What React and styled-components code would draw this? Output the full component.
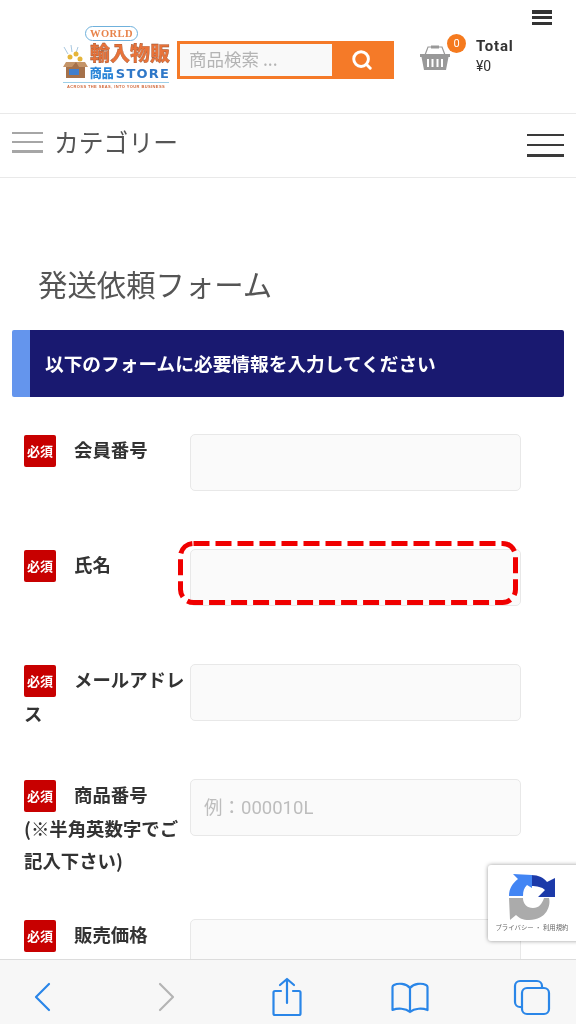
import React from 'react'
import styled, { createGlobalStyle } from 'styled-components'
import { Search } from 'lucide-react'

const GlobalStyle = createGlobalStyle`
  html, body {
    margin: 0;
    padding: 0;
    background: #fff;
  }
  * {
    box-sizing: border-box;
  }
`

const sans = `Roboto, "Noto Sans CJK JP", sans-serif`
const jp = `"Noto Sans CJK JP", sans-serif`

const Page = styled.div`
  position: relative;
  width: 576px;
  height: 1024px;
  overflow: hidden;
  background: #fff;
  font-family: ${jp};
  filter: blur(0.45px);
`
const Header = styled.header`
  display: flex;
  align-items: flex-start;
  height: 114px;
  padding: 26px 24px 0 60px;
  border-bottom: 1px solid #e9e9e9;
`
const Logo = styled.div`
  display: flex;
  flex-direction: column;
  width: 112px;
  flex: none;
`
const LogoPill = styled.div`
  width: 53px;
  height: 15px;
  margin-left: 25px;
  border: 1px solid #6fb1dc;
  border-radius: 8px;
  color: #e8834a;
  font: 900 10.5px/13px "Liberation Serif", serif;
  letter-spacing: 0.4px;
  text-align: center;
`
const LogoMiddle = styled.div`
  display: flex;
  align-items: flex-end;
  padding-left: 3px;
`
const LogoBox = styled.svg`
  width: 25px;
  height: 36px;
  flex: none;
  margin: 0 -4px 1px 0;
`
const LogoWords = styled.div`
  display: flex;
  flex-direction: column;
  align-items: flex-end;
  flex: 1;
  padding-right: 2px;
`
const LogoBig = styled.div`
  color: #e8733a;
  font: 900 20px/24px ${jp};
  white-space: nowrap;
  -webkit-text-stroke: 0.3px #8a4a2a;
`
const LogoStore = styled.div`
  color: #2c86d8;
  font: 900 12px/15px ${jp};
  white-space: nowrap;
`
const StoreLatin = styled.span`
  margin-left: 2px;
  font: 900 13px/15px "DejaVu Sans", sans-serif;
  letter-spacing: 1.2px;
  color: #2f78c8;
`
const LogoTag = styled.div`
  width: 106px;
  margin: 1px 0 0 3px;
  padding-top: 1px;
  border-top: 1px solid #9ccfe8;
  color: #d0683a;
  font: 700 4px/5px "Liberation Sans", sans-serif;
  letter-spacing: 0.4px;
  white-space: nowrap;
  text-align: center;
`
const SearchForm = styled.form`
  display: flex;
  width: 217px;
  height: 38px;
  margin: 15px 0 0 5px;
  flex: none;
  border: 3px solid #f57a28;
  background: #f57a28;
`
const SearchInput = styled.input`
  width: 152px;
  height: 100%;
  padding: 0 10px 3px 9px;
  border: 0;
  border-radius: 0;
  outline: none;
  background: #f9f9f9;
  font: 400 17.5px ${jp};
  &::placeholder {
    color: #b4b4b4;
    opacity: 1;
  }
`
const SearchButton = styled.button`
  display: flex;
  flex: 1;
  align-items: center;
  justify-content: center;
  padding: 0;
  border: 0;
  background: none;
  color: #fff;
`
const Cart = styled.div`
  display: flex;
  margin: 9px 0 0 26px;
  flex: none;
`
const BasketWrap = styled.div`
  position: relative;
  width: 30px;
  height: 30px;
  margin-top: 8px;
`
const CartBadge = styled.span`
  position: absolute;
  top: -9px;
  left: 27px;
  width: 19px;
  height: 19px;
  border-radius: 50%;
  background: #f57a1e;
  color: #fff;
  font: 400 11px/19px ${sans};
  text-align: center;
`
const CartText = styled.div`
  margin: 2px 0 0 26px;
  color: #333;
`
const CartTotal = styled.div`
  font: 700 15px/19px ${sans};
  letter-spacing: 0.8px;
`
const CartPrice = styled.div`
  font: 400 14px/20px ${sans};
`
const Bars = styled.button`
  display: flex;
  flex-direction: column;
  justify-content: space-between;
  flex: none;
  width: ${(p) => p.$w}px;
  height: ${(p) => p.$h}px;
  padding: 0;
  border: 0;
  background: none;
  span {
    display: block;
    height: ${(p) => p.$t}px;
    background: ${(p) => p.$c};
  }
`
const TopBars = styled(Bars)`
  margin: -16px 0 0 auto;
`
const CategoryBars = styled(Bars)`
  margin-bottom: 7px;
`
const SideBars = styled(Bars)`
  margin-top: -1px;
`
const CategoryBar = styled.nav`
  display: flex;
  align-items: center;
  height: 64px;
  padding: 0 12px;
  border-bottom: 1px solid #e9e9e9;
`
const CategoryName = styled.span`
  margin: -8px auto 0 11px;
  color: #555;
  font: 400 24.8px/1 ${jp};
`
const Title = styled.h1`
  margin: 84px 0 26px 38px;
  color: #555;
  font: 400 29.4px/42px ${jp};
`
const Banner = styled.div`
  display: flex;
  align-items: center;
  height: 67px;
  margin: 0 12px 37px;
  padding-left: 15px;
  border-left: 18px solid #6495ed;
  border-radius: 2px;
  background: #191970;
  color: #fff;
  font: 700 18.7px/1 ${jp};
`
const Form = styled.form`
  padding-left: 24px;
`
const Row = styled.div`
  display: grid;
  grid-template-columns: 166px 331px;
  align-items: start;
`
const Label = styled.label`
  display: block;
  margin-top: -1px;
  padding-bottom: 42px;
  color: #333;
  font: 700 18.4px/32.4px ${jp};
`
const Required = styled.span`
  display: inline-block;
  width: 32px;
  height: 32px;
  margin: 2px 18px 0 0;
  border-radius: 2px;
  background: #c80000;
  color: #fff;
  font: 700 13px/32px ${jp};
  text-align: center;
  vertical-align: top;
`
const Field = styled.div`
  position: relative;
  margin-bottom: 58px;
`
const Input = styled.input`
  display: block;
  width: 100%;
  height: 57px;
  padding: 0 13px;
  border: 1.5px solid #e8e8e8;
  border-radius: 5px;
  outline: none;
  background: #fafafa;
  font: 400 18.5px ${sans};
  &::placeholder {
    color: #bdbdbd;
    opacity: 1;
  }
`
const Highlight = styled.svg`
  position: absolute;
  top: -8px;
  left: -12px;
  width: 340px;
  height: 64px;
  overflow: visible;
`
const Recaptcha = styled.div`
  position: absolute;
  top: 865px;
  left: 488px;
  width: 96px;
  height: 76px;
  padding: 8px 8px 0 21px;
  border-radius: 3px;
  background: #fff;
  box-shadow: 0 0 4px rgba(0, 0, 0, 0.4);
`
const RecaptchaLogo = styled.svg`
  display: block;
  width: 46px;
  height: 49px;
`
const RecaptchaText = styled.div`
  width: 88px;
  margin: 0 0 0 -21px;
  color: #666;
  font: 400 6.4px/12px ${jp};
  text-align: center;
  white-space: nowrap;
`
const Toolbar = styled.div`
  position: absolute;
  left: 0;
  right: 0;
  bottom: 0;
  display: flex;
  align-items: center;
  justify-content: space-between;
  height: 65px;
  padding: 10px 28px 0 26px;
  border-top: 1px solid #dcdcdc;
  background: #f7f7f7;
`
const ToolIcon = styled.svg`
  width: 40px;
  height: 40px;
  margin: 0 -4px;
  fill: none;
  stroke: ${(p) => p.$c || '#2a86e8'};
  stroke-width: 2.2;
  stroke-linecap: round;
  stroke-linejoin: round;
`

const Menu = ({ Comp = Bars, w, h, t, c }) => (
  <Comp $w={w} $h={h} $t={t} $c={c}>
    <span />
    <span />
    <span />
  </Comp>
)

const fields = [
  { label: '会員番号' },
  { label: '氏名', marked: true },
  { label: 'メールアドレス' },
  { label: '商品番号', note: '(※半角英数字でご記入下さい)', placeholder: '例：000010L' },
  { label: '販売価格' },
]

const App = () => (
  <Page>
    <GlobalStyle />
    <Header>
      <Logo>
        <LogoPill>WORLD</LogoPill>
        <LogoMiddle>
          <LogoBox viewBox="0 0 25 36">
            <path d="M1 3l4 7M8 1l1 7M15 3l-2 6" stroke="#a9c8e0" strokeWidth="1" />
            <circle cx="7" cy="13" r="2.500" fill="#e5b53a" />
            <circle cx="13" cy="10" r="2.500" fill="#e5b53a" />
            <circle cx="17" cy="15" r="2.500" fill="#e5b53a" />
            <path d="M3 18h19v16H3z" fill="#a5714a" />
            <path d="M3 18L0 23h9l4-5zM22 18l3 5h-9l-3-5z" fill="#c49468" />
            <path d="M6 25h10v6H6z" fill="#3f7fce" />
          </LogoBox>
          <LogoWords>
            <LogoBig>輸入物販</LogoBig>
            <LogoStore>
              商品<StoreLatin>STORE</StoreLatin>
            </LogoStore>
          </LogoWords>
        </LogoMiddle>
        <LogoTag>ACROSS THE SEAS, INTO YOUR BUSINESS</LogoTag>
      </Logo>
      <SearchForm>
        <SearchInput placeholder="商品検索 ..." />
        <SearchButton type="button" aria-label="search">
          <Search size={22} strokeWidth={3.2} />
        </SearchButton>
      </SearchForm>
      <Cart>
        <BasketWrap>
          <svg width="30" height="28" viewBox="0 0 30 28">
            <path d="M5 12L8 4h14l3 8" fill="none" stroke="#999" strokeWidth="1.2" />
            <path d="M11 2.500h8v3h-8z" fill="#999" />
            <path d="M0 11h30v3h-1.500l-2.500 13H4L1.500 14H0z" fill="#999" />
            <path d="M8 16v8M12.500 16v8M17.500 16v8M22 16v8" stroke="#fff" strokeWidth="2" />
          </svg>
          <CartBadge>0</CartBadge>
        </BasketWrap>
        <CartText>
          <CartTotal>Total</CartTotal>
          <CartPrice>¥0</CartPrice>
        </CartText>
      </Cart>
      <Menu Comp={TopBars} w={20} h={15} t={3.5} c="#333" />
    </Header>
    <CategoryBar>
      <Menu Comp={CategoryBars} w={31} h={21} t={2.5} c="#a6a6a6" />
      <CategoryName>カテゴリー</CategoryName>
      <Menu Comp={SideBars} w={37} h={23} t={2.5} c="#3a3a3a" />
    </CategoryBar>
    <Title>発送依頼フォーム</Title>
    <Banner>以下のフォームに必要情報を入力してください</Banner>
    <Form>
      {fields.map((f) => (
        <Row key={f.label}>
          <Label>
            <Required>必須</Required>
            {f.label}
            {f.note && <br />}
            {f.note}
          </Label>
          <Field>
            <Input placeholder={f.placeholder} />
            {f.marked && (
              <Highlight viewBox="0 0 340 64">
                <rect
                  x="2.500"
                  y="2.500"
                  width="335"
                  height="59"
                  rx="13"
                  fill="none"
                  stroke="#f00000"
                  strokeWidth="5"
                  strokeDasharray="16 6"
                />
              </Highlight>
            )}
          </Field>
        </Row>
      ))}
    </Form>
    <Recaptcha>
      <RecaptchaLogo viewBox="0 0 46 49">
        <path d="M22 2c8 0 13 3 16 7l8-4v19H29l7-7c-3-3-8-4-14-4z" fill="#1c3aa9" />
        <path d="M0 23C0 15 4 10 9 6L4 1l19 1v13l-5-3c-3 3-4 6-4 11z" fill="#4285f4" />
        <path d="M0 25h14c0 6 4 10 10 10 6 0 9-4 11-10h5c2 7-2 22-20 22-6 0-10-2-13-5l-6 5z" fill="#ababab" />
      </RecaptchaLogo>
      <RecaptchaText>プライバシー ・ 利用規約</RecaptchaText>
    </Recaptcha>
    <Toolbar>
      <ToolIcon viewBox="0 0 40 40">
        <path d="M27 7L14 20l13 13" />
      </ToolIcon>
      <ToolIcon viewBox="0 0 40 40" $c="#b4b4b4">
        <path d="M15 7l13 13-13 13" />
      </ToolIcon>
      <ToolIcon viewBox="0 0 40 40">
        <path d="M14 14H8a1.500 1.500 0 0 0-1.500 1.500v21A1.500 1.500 0 0 0 8 38h24a1.500 1.500 0 0 0 1.500-1.500v-21A1.500 1.500 0 0 0 32 14h-6M20 26V2M13 8l7-6 7 6" />
      </ToolIcon>
      <ToolIcon viewBox="0 0 40 40">
        <path d="M20 11C16 6 8 6 4 8c-1 .5-1.500 1-1.500 2v23c5-2 13-2 17.500 2 4.500-4 12.500-4 17.500-2V10c0-1-.5-1.500-1.500-2-4-2-12-2-16 3zM20 11v24" />
      </ToolIcon>
      <ToolIcon viewBox="0 0 40 40">
        <path d="M9 30H8a5 5 0 0 1-5-5V9a5 5 0 0 1 5-5h17a5 5 0 0 1 5 5v2" />
        <rect x="10" y="11" width="27" height="26" rx="5" />
      </ToolIcon>
    </Toolbar>
  </Page>
)

export default App
